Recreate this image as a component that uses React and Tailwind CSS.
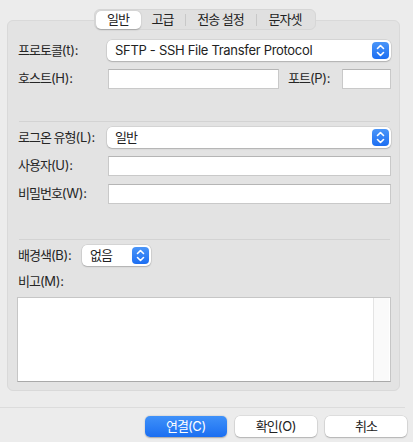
import React from "react";

const font = { fontFamily: 'Inter, "Noto Sans CJK KR", sans-serif' };

function T({ children }) {
  const parts = String(children).split(/([\u3131-\uD79D ]*[\u3131-\uD79D]+)/).filter((p) => p !== "");
  return (
    <>
      {parts.map((p, i) =>
        /[\u3131-\uD79D]/.test(p) ? (
          <span key={i} className="tracking-[-1px]">{p}</span>
        ) : (
          <span key={i} className="tracking-[-0.3px]">{p}</span>
        )
      )}
    </>
  );
}

function Stepper() {
  return (
    <div className="w-[17px] h-[17px] rounded-[4px] bg-gradient-to-b from-[#4a95f8] to-[#1c6ef2] flex items-center justify-center">
      <svg width="9" height="13" viewBox="0 0 9 13" fill="none" stroke="white" strokeWidth="1.6" strokeLinecap="round" strokeLinejoin="round">
        <path d="M1.5 4.5 L4.5 1.5 L7.5 4.5" />
        <path d="M1.5 8.5 L4.5 11.5 L7.5 8.5" />
      </svg>
    </div>
  );
}

function Popup({ text, className }) {
  return (
    <div className={"h-[21px] bg-white rounded-[5px] shadow-[0_0_0_0.5px_rgba(0,0,0,0.12),0_1px_1.5px_rgba(0,0,0,0.18)] flex items-center justify-between pl-[8px] pr-[2px] " + className}>
      <span className="text-[13px] text-[#222]"><T>{text}</T></span>
      <Stepper />
    </div>
  );
}

function Field({ className }) {
  return <div className={"h-[20px] bg-white border border-[#c9c9c9] border-t-[#b5b5b5] " + className} />;
}

function Label({ children, className = "" }) {
  return <div className={"text-[13px] text-[#262626] shrink-0 whitespace-nowrap " + className}><T>{children}</T></div>;
}

function Tab({ children, className = "" }) {
  return <div className={"flex items-center justify-center text-[13px] text-[#222] " + className}><T>{children}</T></div>;
}

export default function App() {
  return (
    <div style={font} className="w-[413px] h-[442px] bg-[#ececec] flex flex-col overflow-hidden">
      <div className="flex justify-center pt-[9px] pr-[4px] relative z-10 mb-[-10px]">
        <div className="flex items-center h-[21px] bg-[#e0e0e0] rounded-[6px] border border-[#d6d6d6] px-[1px]">
          <Tab className="h-[18px] w-[45px] bg-white rounded-[5px] shadow-[0_0.5px_1.5px_rgba(0,0,0,0.25)]">일반</Tab>
          <Tab className="w-[44px]">고급</Tab>
          <div className="w-px h-[12px] bg-[#c8c8c8]" />
          <Tab className="w-[70px]">전송 설정</Tab>
          <div className="w-px h-[12px] bg-[#c8c8c8]" />
          <Tab className="w-[57px]">문자셋</Tab>
        </div>
      </div>
      <div className="ml-[7px] w-[393px] h-[371px] bg-[#e3e3e3] border border-[#d9d9d9] rounded-[6px] pt-[19px] pl-[10px] pr-[8px] flex flex-col">
        <div className="flex items-center h-[21px]">
          <Label className="w-[89px]">프로토콜(t):</Label>
          <Popup text="SFTP - SSH File Transfer Protocol" className="flex-1" />
        </div>
        <div className="flex items-center h-[20px] mt-[8px]">
          <Label className="w-[90px]">호스트(H):</Label>
          <Field className="w-[171px]" />
          <Label className="ml-[9px] w-[54px]">포트(P):</Label>
          <Field className="flex-1" />
        </div>
        <div className="h-px bg-[#d3d3d3] mt-[32px] mx-[1px]" />
        <div className="flex items-center h-[21px] mt-[5px]">
          <Label className="w-[89px]">로그온 유형(L):</Label>
          <Popup text="일반" className="flex-1" />
        </div>
        <div className="flex items-center h-[20px] mt-[8px]">
          <Label className="w-[90px]">사용자(U):</Label>
          <Field className="flex-1" />
        </div>
        <div className="flex items-center h-[20px] mt-[8px]">
          <Label className="w-[90px]">비밀번호(W):</Label>
          <Field className="flex-1" />
        </div>
        <div className="h-px bg-[#d3d3d3] mt-[35px] mx-[1px]" />
        <div className="flex items-center h-[21px] mt-[5px]">
          <Label className="w-[64px]">배경색(B):</Label>
          <Popup text="없음" className="w-[69px]" />
        </div>
        <div className="h-[18px] mt-[7px] flex items-center">
          <Label>비고(M):</Label>
        </div>
        <div className="mt-[6px] -ml-[1px] h-[85px] bg-white border border-[#c6c6c6] border-b-[#a9a9a9] flex justify-end">
          <div className="w-[16px] h-full bg-[#fafafa] border-l border-[#e4e4e4] mr-[1px]" />
        </div>
      </div>
      <div className="h-px bg-[#dcdcdc] mt-[16px] mr-[8px]" />
      <div className="flex justify-end gap-[8px] pr-[6px] mt-[8px]">
        <div className="w-[82px] h-[21px] rounded-[5px] bg-gradient-to-b from-[#3f91f9] to-[#1a6ef1] shadow-[0_0.5px_1.5px_rgba(0,0,0,0.3)] flex items-center justify-center text-[13px] text-white"><T>연결(C)</T></div>
        <div className="w-[82px] h-[21px] rounded-[5px] bg-white shadow-[0_0_0_0.5px_rgba(0,0,0,0.12),0_1px_1.5px_rgba(0,0,0,0.2)] flex items-center justify-center text-[13px] text-[#222]"><T>확인(O)</T></div>
        <div className="w-[82px] h-[21px] rounded-[5px] bg-white shadow-[0_0_0_0.5px_rgba(0,0,0,0.12),0_1px_1.5px_rgba(0,0,0,0.2)] flex items-center justify-center text-[13px] text-[#222]"><T>취소</T></div>
      </div>
    </div>
  );
}
